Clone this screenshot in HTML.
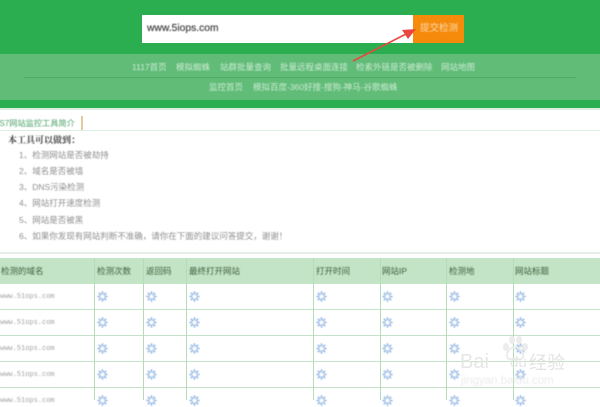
<!DOCTYPE html>
<html lang="zh"><head><meta charset="utf-8"><title>网站监控工具</title>
<style>
html,body{margin:0;padding:0}
body{width:600px;height:400px;overflow:hidden;position:relative;background:#fff;font-family:"Liberation Sans","Noto Sans CJK SC",sans-serif}
.a{position:absolute}
.t{position:absolute;white-space:nowrap;line-height:12px;filter:blur(.55px)}
.n{font-size:8.5px;color:#cdeBd4;top:61px}
.l{font-size:8.5px;color:#8f8f8f;left:19px}
.h{font-size:8.5px;color:#42603f;top:265px}
.d{font-family:"Liberation Mono",monospace;font-size:7px;color:#a4a4a4;left:0;top:0}
.v{position:absolute;top:258px;width:1px;height:142px;background:#b5dcb9}
.r{position:absolute;left:0;width:600px;height:1px;background:#c4e3c8}
svg.s{position:absolute;width:11px;height:11px;filter:blur(.5px)}
</style></head><body>
<svg width="0" height="0" style="position:absolute"><defs><symbol id="sp" viewBox="0 0 12 12"><g stroke="#9dbde6" stroke-width="2" stroke-linecap="round"><path d="M6 1.2v1.8M6 9v1.8M1.2 6H3M9 6h1.8M2.6 2.6 3.9 3.9M8.1 8.1l1.3 1.3M2.6 9.4 3.9 8.1M8.1 3.9l1.3-1.3"/></g></symbol></defs></svg>
<div class="a" style="left:0;top:0;width:600px;height:108px;background:#2bae50"></div>
<div class="a" style="left:0;top:108px;width:600px;height:2px;background:#dcefe0"></div>
<div class="a" style="left:142px;top:15px;width:271px;height:28px;background:#fff;filter:blur(.3px)"></div>
<div class="a" style="left:413px;top:15px;width:51px;height:28px;background:#f58a0b;filter:blur(.3px)"></div>
<div class="t" style="left:147px;top:23px;font-size:10.3px;color:#444;-webkit-text-stroke:.2px #444">www.5iops.com</div>
<div class="t" style="left:420px;top:23px;font-size:9.5px;color:#fbdcae">提交检测</div>
<div class="a" style="left:0;top:54px;width:600px;height:46px;background:#60bc77"></div>
<div class="a" style="left:24px;top:77px;width:552px;height:1px;background:#50ad69"></div>
<span class="t n" style="left:132px">1117首页</span>
<span class="t n" style="left:176px">模拟蜘蛛</span>
<span class="t n" style="left:220px">站群批量查询</span>
<span class="t n" style="left:280px">批量远程桌面连接</span>
<span class="t n" style="left:356px">检索外链是否被删除</span>
<span class="t n" style="left:441px">网站地图</span>
<span class="t n" style="left:209px;top:81px">监控首页</span>
<span class="t n" style="left:253px;top:81px">模拟百度-360好搜-搜狗-神马-谷歌蜘蛛</span>
<svg class="a" style="left:350px;top:25px;width:70px;height:40px" viewBox="0 0 70 40"><path d="M3 36 58 8" stroke="#e8473f" stroke-width="1.6" fill="none"/><path d="M66 4 52 5 58 14Z" fill="#e8473f"/></svg>

<div class="t" style="left:-3px;top:118px;font-size:8.2px;color:#4ca268">IS7网站监控工具简介</div>
<div class="a" style="left:81px;top:116px;width:2px;height:14px;background:#e3c9a0"></div>
<div class="a" style="left:0;top:130px;width:600px;height:1px;background:#dcefe0"></div>
<div class="t" style="left:8px;top:134px;font-size:9px;color:#444;font-family:'Liberation Serif','Noto Serif CJK SC',serif;font-weight:700">本工具可以做到：</div>
<div class="t l" style="top:149px">1、检测网站是否被劫持</div>
<div class="t l" style="top:165px">2、域名是否被墙</div>
<div class="t l" style="top:181px">3、DNS污染检测</div>
<div class="t l" style="top:197px">4、网站打开速度检测</div>
<div class="t l" style="top:214px">5、网站是否被黑</div>
<div class="t l" style="top:230px">6、如果你发现有网站判断不准确，请你在下面的建议问答提交，谢谢！</div>
<div class="a" style="left:0;top:252px;width:600px;height:2px;background:#e6eee7"></div>

<div class="a" style="left:0;top:258px;width:600px;height:26px;background:#c3e4c6"></div>
<div class="r" style="top:309px"></div><div class="r" style="top:335px"></div><div class="r" style="top:361px"></div><div class="r" style="top:387px"></div>
<i class="v" style="left:94px"></i><i class="v" style="left:143px"></i><i class="v" style="left:186px"></i><i class="v" style="left:313px"></i><i class="v" style="left:380px"></i><i class="v" style="left:446px"></i><i class="v" style="left:513px"></i>
<span class="t h" style="left:1px">检测的域名</span><span class="t h" style="left:97px">检测次数</span><span class="t h" style="left:146px">返回码</span><span class="t h" style="left:189px">最终打开网站</span><span class="t h" style="left:316px">打开时间</span><span class="t h" style="left:382px">网站IP</span><span class="t h" style="left:449px">检测地</span><span class="t h" style="left:515px">网站标题</span>
<span class="t d" style="top:291px">www.51ops.com</span><span class="t d" style="top:317px">www.51ops.com</span><span class="t d" style="top:343px">www.51ops.com</span><span class="t d" style="top:369px">www.51ops.com</span><span class="t d" style="top:395px">www.51ops.com</span>

<svg class="s" style="left:97px;top:291px"><use href="#sp"/></svg><svg class="s" style="left:146px;top:291px"><use href="#sp"/></svg><svg class="s" style="left:189px;top:291px"><use href="#sp"/></svg><svg class="s" style="left:316px;top:291px"><use href="#sp"/></svg><svg class="s" style="left:382px;top:291px"><use href="#sp"/></svg><svg class="s" style="left:449px;top:291px"><use href="#sp"/></svg><svg class="s" style="left:515px;top:291px"><use href="#sp"/></svg>
<svg class="s" style="left:97px;top:317px"><use href="#sp"/></svg><svg class="s" style="left:146px;top:317px"><use href="#sp"/></svg><svg class="s" style="left:189px;top:317px"><use href="#sp"/></svg><svg class="s" style="left:316px;top:317px"><use href="#sp"/></svg><svg class="s" style="left:382px;top:317px"><use href="#sp"/></svg><svg class="s" style="left:449px;top:317px"><use href="#sp"/></svg><svg class="s" style="left:515px;top:317px"><use href="#sp"/></svg>
<svg class="s" style="left:97px;top:343px"><use href="#sp"/></svg><svg class="s" style="left:146px;top:343px"><use href="#sp"/></svg><svg class="s" style="left:189px;top:343px"><use href="#sp"/></svg><svg class="s" style="left:316px;top:343px"><use href="#sp"/></svg><svg class="s" style="left:382px;top:343px"><use href="#sp"/></svg><svg class="s" style="left:449px;top:343px"><use href="#sp"/></svg><svg class="s" style="left:515px;top:343px"><use href="#sp"/></svg>
<svg class="s" style="left:97px;top:369px"><use href="#sp"/></svg><svg class="s" style="left:146px;top:369px"><use href="#sp"/></svg><svg class="s" style="left:189px;top:369px"><use href="#sp"/></svg><svg class="s" style="left:316px;top:369px"><use href="#sp"/></svg><svg class="s" style="left:382px;top:369px"><use href="#sp"/></svg><svg class="s" style="left:449px;top:369px"><use href="#sp"/></svg><svg class="s" style="left:515px;top:369px"><use href="#sp"/></svg>
<svg class="s" style="left:97px;top:395px"><use href="#sp"/></svg><svg class="s" style="left:146px;top:395px"><use href="#sp"/></svg><svg class="s" style="left:189px;top:395px"><use href="#sp"/></svg><svg class="s" style="left:316px;top:395px"><use href="#sp"/></svg><svg class="s" style="left:382px;top:395px"><use href="#sp"/></svg><svg class="s" style="left:449px;top:395px"><use href="#sp"/></svg><svg class="s" style="left:515px;top:395px"><use href="#sp"/></svg>

<svg class="a" style="left:500px;top:335px;width:30px;height:28px" viewBox="0 0 30 28"><g fill="#ececec"><ellipse cx="6" cy="12" rx="3" ry="4"/><ellipse cx="12" cy="5" rx="3" ry="4"/><ellipse cx="19" cy="5" rx="3" ry="4"/><ellipse cx="25" cy="12" rx="3" ry="4"/></g><path d="M15 12c-5 0-9 6-8 10 1 3 5 2 8 2s7 1 8-2c1-4-3-10-8-10Z" fill="none" stroke="#ececec" stroke-width="2"/></svg>
<div class="t" style="left:460px;top:350px;font-size:20px;line-height:24px;color:#e6e6e6;filter:blur(.35px)">Bai</div>
<div class="t" style="left:510px;top:351px;font-size:15px;line-height:24px;color:#e6e6e6;filter:blur(.35px)">du</div>
<div class="t" style="left:529px;top:351px;font-size:18px;line-height:24px;color:#e3e3e3;filter:blur(.35px)">经验</div>
<div class="t" style="left:461px;top:375px;font-size:11.5px;color:#ececec">jingyan.baidu.com</div>
</body></html>
